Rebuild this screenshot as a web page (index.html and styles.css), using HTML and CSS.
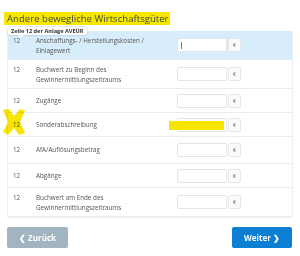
FILE: index.html
```
<!DOCTYPE html>
<html lang="de">
<head>
    <meta charset="UTF-8">
    <meta name="viewport" content="width=device-width, initial-scale=1.0">
    <title>Andere bewegliche Wirtschaftsgüter</title>
    <link rel="stylesheet" href="styles.css">
</head>
<body>

    <div class="page">
        <h1 class="title"><span class="marker">Andere bewegliche Wirtschaftsgüter</span></h1>

        <div class="table">
            <!-- Hinweis zur Zeile -->
            <div class="tip">Zeile 12 der Anlage AVEÜR</div>

            <div class="row two active">
                <span class="num">12</span>
                <span class="label">Anschaffungs- / Herstellungskosten / Einlagewert</span>
                <div class="field"><span class="input"><span class="caret"></span></span><span class="unit">€</span></div>
            </div>
            <div class="row two">
                <span class="num">12</span>
                <span class="label">Buchwert zu Beginn des Gewinnermittlungszeitraums</span>
                <div class="field"><span class="input"></span><span class="unit">€</span></div>
            </div>
            <div class="row">
                <span class="num">12</span>
                <span class="label">Zugänge</span>
                <div class="field"><span class="input"></span><span class="unit">€</span></div>
            </div>
            <div class="row">
                <span class="num">12</span>
                <span class="label">Sonderabschreibung</span>
                <div class="field"><span class="input"></span><span class="unit">€</span><span class="hl-bar"></span></div>
                <!-- Markierung links -->
                <svg class="hl-cross" width="24" height="28" viewBox="0 0 24 28">
                    <path d="M1 2 L7 1 L12 8 L18 1 L23 3 L18 14 L23 25 L17 27 L12 20 L6 27 L1 24 L6 14 Z" fill="#f7e400"/>
                </svg>
            </div>
            <div class="row tall">
                <span class="num">12</span>
                <span class="label">AfA/Auflösungsbetrag</span>
                <div class="field"><span class="input"></span><span class="unit">€</span></div>
            </div>
            <div class="row">
                <span class="num">12</span>
                <span class="label">Abgänge</span>
                <div class="field"><span class="input"></span><span class="unit">€</span></div>
            </div>
            <div class="row two">
                <span class="num">12</span>
                <span class="label">Buchwert am Ende des Gewinnermittlungszeitraums</span>
                <div class="field"><span class="input"></span><span class="unit">€</span></div>
            </div>
        </div>

        <div class="nav">
            <button class="btn back">&#10094; Zurück</button>
            <button class="btn next">Weiter &#10095;</button>
        </div>
    </div>

</body>
</html>
```

FILE: styles.css
```
body {
    margin: 0;
    font-family: "Open Sans", Arial, sans-serif;
    background-color: #fff;
    color: #555;
}

.page {
    padding: 13px 7px 0 7px;
}

.title {
    margin: 0 0 7px 0;
    font-size: 9.6px;
    font-weight: 400;
    line-height: 11px;
    color: #3a4a3e;
}

.marker {
    background-color: #f7e600;
    padding: 0 1px 0 3px;
    margin-left: -3px;
}

.table {
    position: relative;
    border: 1px solid #eef1f4;
    border-top: none;
}

.row {
    position: relative;
    box-sizing: border-box;
    height: 24px;
    display: grid;
    grid-template-columns: 23px 141px 64px;
    align-items: center;
    padding: 0 0 0 5px;
    border-bottom: 1px solid #e8edf1;
    font-size: 6.3px;
    line-height: 9.5px;
}

.row.two {
    height: 29px;
}

.row.tall {
    height: 27px;
}

.row.active {
    background-color: #d8edfc;
}

.num {
    color: #555;
}

.label {
    padding-right: 6px;
}

.row.two .num,
.row.two .label {
    align-self: start;
    padding-top: 5px;
}

.field {
    position: relative;
    display: flex;
    height: 14px;
}

.input {
    width: 50px;
    background-color: #fff;
    border: 1px solid #dfe4e8;
    border-radius: 2px;
    box-sizing: border-box;
    position: relative;
}

.caret {
    position: absolute;
    left: 3px;
    top: 3px;
    width: 1px;
    height: 7px;
    background-color: #777;
}

.unit {
    width: 13px;
    margin-left: 1px;
    box-sizing: border-box;
    border: 1px solid #e4e8ec;
    border-radius: 2px;
    background-color: #fafafa;
    font-size: 5px;
    line-height: 12px;
    text-align: center;
    color: #666;
}

/* Markierungen */
.hl-bar {
    position: absolute;
    left: -8px;
    top: 3px;
    width: 55px;
    height: 9px;
    background-color: #f7e400;
}

.hl-cross {
    position: absolute;
    left: -6px;
    top: -5px;
    mix-blend-mode: multiply;
}

.tip {
    position: absolute;
    top: -4px;
    left: 0;
    z-index: 2;
    background-color: #fff;
    border-radius: 2px;
    box-shadow: 0 0 2px rgba(0, 0, 0, 0.3);
    padding: 1px 3px;
    font-size: 5.6px;
    line-height: 6px;
    font-weight: 700;
    color: #333;
}

.tip::after {
    content: "";
    position: absolute;
    left: 10px;
    bottom: -3px;
    border-left: 3px solid transparent;
    border-right: 3px solid transparent;
    border-top: 3px solid #fff;
}

.nav {
    display: flex;
    justify-content: space-between;
    margin-top: 9px;
    padding-right: 1px;
}

.btn {
    border: none;
    border-radius: 2px;
    height: 21px;
    color: #fff;
    font-family: "Open Sans", Arial, sans-serif;
    font-weight: 700;
    font-size: 8px;
    cursor: pointer;
}

.back {
    width: 61px;
    background-color: #a3b4c1;
}

.next {
    width: 60px;
    background-color: #0b7fd3;
}
```
